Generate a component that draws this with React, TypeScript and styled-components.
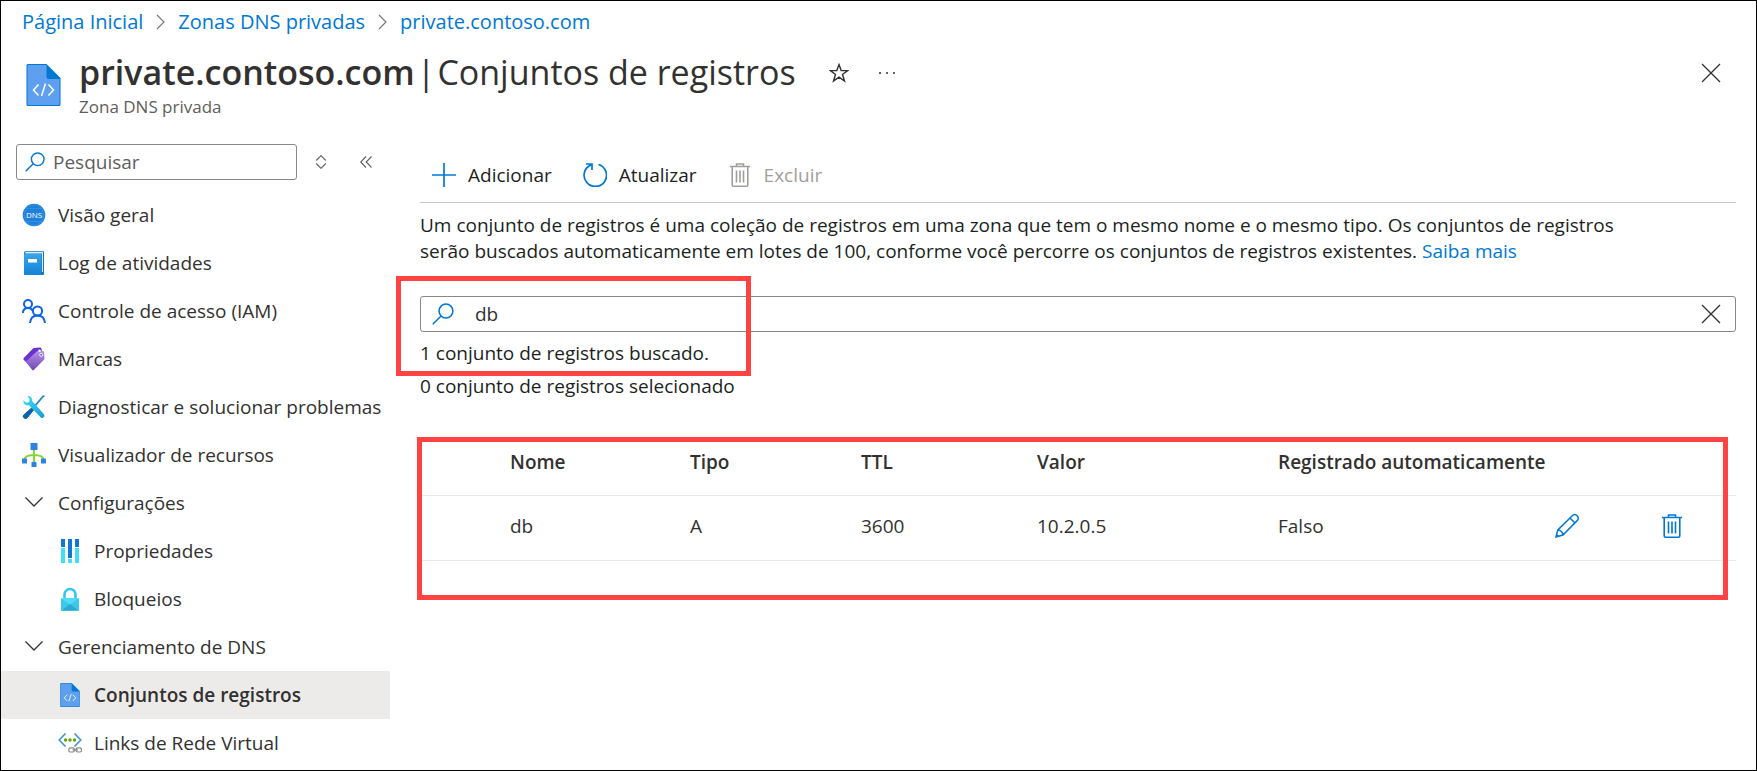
import React, { useState } from 'react';
import styled, { createGlobalStyle } from 'styled-components';

const GlobalStyle = createGlobalStyle`
  *, *::before, *::after { box-sizing: border-box; }
  body {
    margin: 0;
    background: #fff;
    color: #323130;
    font-family: 'Open Sans', 'Noto Sans', sans-serif;
    font-size: 19px;
    line-height: 26px;
  }
  button, input { font: inherit; color: inherit; }
  svg { display: block; flex: none; }
`;

const LINK = '#0078d4';
const MARK = '#ff4343';

const Page = styled.div`
  display: flex;
  flex-direction: column;
  min-height: 100vh;
  border: 1px solid #000;
`;

const Breadcrumb = styled.nav`
  padding: 8px 21px 0;
  font-size: 20px;

  ol {
    display: flex;
    align-items: center;
    gap: 13px;
    margin: 0;
    padding: 0;
    list-style: none;
  }
  li {
    display: flex;
    align-items: center;
    gap: 13px;
  }
`;

const Link = styled.a`
  color: ${LINK};
  text-decoration: none;
`;

const Header = styled.header`
  display: flex;
  align-items: flex-start;
  padding: 14px 33px 0 25px;
`;

const HeaderIcon = styled.div`
  padding: 15px 18px 0 0;
`;

const Titles = styled.div`
  h1 {
    display: flex;
    gap: 2px;
    margin: 0;
    font-size: 34px;
    line-height: 46px;
    font-weight: 400;
  }
  strong { font-weight: 600; }
  p {
    margin: 0;
    font-size: 17px;
    line-height: 24px;
    color: #605e5c;
  }
`;

const IconButton = styled.button`
  display: flex;
  align-items: center;
  justify-content: center;
  flex: none;
  width: 24px;
  height: 24px;
  padding: 0;
  border: 0;
  background: none;
`;

const TitleActions = styled.div`
  display: flex;
  align-items: center;
  flex: 1;
  gap: 24px;
  height: 48px;
  padding-left: 31px;

  button:last-child { margin-left: auto; }
`;

const Body = styled.div`
  display: flex;
  flex: 1;
`;

const Sidebar = styled.aside`
  flex: none;
  width: 389px;
`;

const SidebarTools = styled.div`
  display: flex;
  align-items: center;
  padding: 25px 12px 0 15px;

  button { margin-left: 12px; }
  button + button { margin-left: 21px; }
`;

const SearchField = styled.label<{ $wide?: boolean }>`
  display: flex;
  align-items: center;
  flex: 1;
  gap: ${(p) => (p.$wide ? 21 : 8)}px;
  min-width: 0;
  height: 36px;
  padding: ${(p) => (p.$wide ? '0 12px 0 11px' : '0 8px')};
  border: 1px solid #8a8886;
  border-radius: 3px;

  input {
    flex: 1;
    min-width: 0;
    padding: 0;
    border: 0;
    outline: 0;
    background: none;
  }
  input::placeholder { color: #605e5c; opacity: 1; }
`;

const Menu = styled.ul`
  margin: 0;
  padding: 11px 0 3px;
  list-style: none;

  ul {
    margin: 0;
    padding: 0;
    list-style: none;
  }
`;

const menuRow = `
  display: flex;
  align-items: center;
  gap: 12px;
  width: 100%;
  height: 48px;
  border: 0;
  text-align: left;
  white-space: nowrap;
  color: inherit;
  text-decoration: none;
`;

const MenuLink = styled.a<{ $nested?: boolean; $selected?: boolean }>`
  ${menuRow}
  padding-left: ${(p) => (p.$nested ? 57 : 21)}px;
  background: ${(p) => (p.$selected ? '#edebe9' : 'transparent')};
  font-weight: ${(p) => (p.$selected ? 600 : 400)};
`;

const MenuGroup = styled.button`
  ${menuRow}
  padding: 0 0 0 21px;
  background: none;
`;

const Main = styled.main`
  flex: 1;
  min-width: 0;
  padding: 24px 20px 0 30px;
`;

const Toolbar = styled.div`
  display: flex;
  align-items: center;
  gap: 31px;
  height: 60px;
  padding: 5px 12px 0;
  border-bottom: 1px solid #c8c6c4;
`;

const Command = styled.button`
  display: flex;
  align-items: center;
  gap: 12px;
  padding: 0;
  border: 0;
  background: none;
  color: #201f1e;

  &:disabled { color: #a19f9d; }
`;

const Intro = styled.p`
  max-width: 1230px;
  margin: 0;
  padding: 9px 0 32px;
  color: #201f1e;
`;

const Marked = styled.div`
  position: relative;
`;

const Callout = styled.div<{ $inset: string; $width?: string }>`
  position: absolute;
  inset: ${(p) => p.$inset};
  width: ${(p) => p.$width ?? 'auto'};
  border: 5px solid ${MARK};
  pointer-events: none;
`;

const Status = styled.p`
  margin: 0;
  padding-top: 9px;
  line-height: 24px;
  color: #201f1e;
`;

const TableArea = styled(Marked)`
  margin-top: 33px;
  padding-bottom: 39px;
`;

const RecordTable = styled.table`
  width: 100%;
  table-layout: fixed;
  border-collapse: collapse;

  th, td {
    height: 65px;
    padding: 0 0 1px;
    border-bottom: 1px solid #edebe9;
    text-align: left;
    white-space: nowrap;
    font-weight: 400;
  }
  th { height: 64px; font-weight: 600; }
  td { padding-bottom: 3px; }
`;

const Search = ({ size = 20 }: { size?: number }) => (
  <svg width={size} height={size} viewBox="0 0 20 20" fill="none" stroke={LINK} strokeWidth="1.4">
    <circle cx="12.7" cy="7.3" r="6.3" />
    <path d="M8.2 11.8 0.7 19.3" />
  </svg>
);

const Close = () => (
  <svg width="20" height="20" viewBox="0 0 20 20" fill="none" stroke="#323130" strokeWidth="1.3">
    <path d="m1 1 18 18M19 1 1 19" />
  </svg>
);

const Crumb = () => (
  <svg width="9" height="16" viewBox="0 0 9 16" fill="none" stroke="#797775" strokeWidth="1.2">
    <path d="m1 1 7 7-7 7" />
  </svg>
);

const Star = () => (
  <svg width="20" height="20" viewBox="0 0 20 20" fill="none" stroke="#323130" strokeWidth="1.4">
    <path d="m10 1.6 2.2 6h6.5l-5.200 3.900 2 6.500L10 14.100l-5.500 3.900 2-6.500-5.200-3.900h6.500z" />
  </svg>
);

const Dots = () => (
  <svg width="18" height="4" viewBox="0 0 18 4" fill="#323130">
    <circle cx="2" cy="2" r="1" />
    <circle cx="9" cy="2" r="1" />
    <circle cx="16" cy="2" r="1" />
  </svg>
);

const Expand = () => (
  <svg width="12" height="14" viewBox="0 0 12 14" fill="none" stroke="#605e5c" strokeWidth="1.1">
    <path d="m1.200 5.500 4.800-4.800 4.800 4.800M1.200 8.500 6 13.300l4.800-4.800" />
  </svg>
);

const Collapse = () => (
  <svg width="12" height="12" viewBox="0 0 12 12" fill="none" stroke="#605e5c" strokeWidth="1.1">
    <path d="M6 .5.7 6 6 11.500M11.500.5 6.200 6l5.300 5.500" />
  </svg>
);

const Chevron = () => (
  <svg width="24" height="24" viewBox="0 0 24 24" fill="none" stroke="#323130" strokeWidth="1.3">
    <path d="m3.500 6.500 8.500 8.500 8.500-8.500" />
  </svg>
);

const ZoneFile = ({ width, height }: { width: number; height: number }) => (
  <svg width={width} height={height} viewBox="0 0 34 42">
    <path d="M1.500 0H20l14 14v26.500a1.500 1.500 0 0 1-1.500 1.500h-31A1.500 1.500 0 0 1 0 40.500v-39A1.500 1.500 0 0 1 1.500 0z" fill="#0078d4" />
    <path d="M1.800 1H20v12a2 2 0 0 0 2 2h11v25a1 1 0 0 1-1 1H2a1 1 0 0 1-1-1V1.800A.8.8 0 0 1 1.800 1z" fill="#5ea0ef" />
    <path d="m12 20.500-5 5.500 5 5.500M22 20.500l5 5.500-5 5.500M19 19.500l-4 12.500" fill="none" stroke="#fff" strokeWidth="1.500" />
  </svg>
);

const Dns = () => (
  <svg width="24" height="24" viewBox="0 0 24 24">
    <circle cx="12" cy="12" r="11.300" fill="#1f80dc" />
    <path d="M4 5.500 8.500 2h7L20 5.500l2 6.500-2 6.500-4.500 3.500h-7L4 18.500 2 12zM4 5.500h16M4 18.500h16" fill="none" stroke="#3f9bf0" strokeWidth=".6" />
    <text x="12" y="15" fill="#fff" fontSize="8" textAnchor="middle">DNS</text>
  </svg>
);

const Log = () => (
  <svg width="24" height="24" viewBox="0 0 24 24">
    <defs>
      <linearGradient id="log" x1="0" y1="0" x2="0" y2="1">
        <stop offset="0" stopColor="#3ba5ea" />
        <stop offset="1" stopColor="#1583d6" />
      </linearGradient>
    </defs>
    <path d="M4 0h17a1 1 0 0 1 1 1v22a1 1 0 0 1-1 1H3a1 1 0 0 1-1-1V2a2 2 0 0 1 2-2z" fill="#1a78b8" />
    <path d="M4 .8h17V21h-1V2.500H3.200A1.700 1.700 0 0 1 4 .8z" fill="#d9eefb" />
    <path d="M2 3h17.500v21H3a1 1 0 0 1-1-1z" fill="url(#log)" />
    <path d="M6 8h9v3.500H6z" fill="#fff" />
  </svg>
);

const People = () => (
  <svg width="24" height="24" viewBox="0 0 24 24" fill="none" stroke="#0f62e6" strokeWidth="2">
    <circle cx="6" cy="5" r="4" />
    <path d="M.8 14c.3-3 2.300-5 5.200-5 2 0 3.700 1 4.500 2.500" />
    <circle cx="15.500" cy="12" r="4.600" />
    <path d="M8 24c.5-4.500 3.300-7.400 7.500-7.400S22.500 19.500 23 24" />
  </svg>
);

const Tag = () => (
  <svg width="24" height="24" viewBox="0 0 24 24">
    <defs>
      <linearGradient id="tag" x1="0" y1="0" x2="0" y2="1">
        <stop offset="0" stopColor="#b494e8" />
        <stop offset="1" stopColor="#7246b4" />
      </linearGradient>
    </defs>
    <path d="M11.500 1 18 .6a1.500 1.500 0 0 1 1.500 1.200L20.500 8 7 18l-5.300-5.300a1.200 1.200 0 0 1 .1-1.700z" fill="#6a31d0" />
    <path d="M15 4.200 20.700 4A1.500 1.500 0 0 1 22.200 5.400l.2 6a2 2 0 0 1-.7 1.600L11.800 23a1 1 0 0 1-1.500 0l-6-7.500a1 1 0 0 1 .1-1.400z" fill="url(#tag)" />
    <circle cx="17.500" cy="3.800" r="1.300" fill="#fff" />
    <circle cx="19.200" cy="7.800" r="1.500" fill="#7a45cc" stroke="#fff" />
  </svg>
);

const Tools = () => (
  <svg width="24" height="24" viewBox="0 0 24 24">
    <defs>
      <linearGradient id="wrench" x1="0" y1="0" x2="1" y2="1">
        <stop offset="0" stopColor="#3fe0fa" />
        <stop offset="1" stopColor="#1a9cd0" />
      </linearGradient>
    </defs>
    <path d="M22.500 1 21 1.500l-3 3.500-5.500 6.500" fill="none" stroke="#1b87c4" strokeWidth="1.800" />
    <path d="m12 11 1.500 1.500-8 10a2 2 0 0 1-3.800-2.500z" fill="#0a62ac" stroke="#0a62ac" />
    <path d="M5.500 1c2.800-.3 5 1.700 4.600 5L21.800 19a2.200 2.200 0 0 1-3.300 3.200L7 10.300C3.500 11 1 8.500 1.400 5.200l3.100 2.600 2.700-.7.300-2.800z" fill="url(#wrench)" />
  </svg>
);

const Tree = () => (
  <svg width="24" height="24" viewBox="0 0 24 24">
    <path d="M12 6v14M2.500 17c0-4 4-5 9.500-5s9.500 1 9.500 5" fill="none" stroke="#86d633" strokeWidth="2" />
    <rect x="8.500" y="0" width="7" height="7" rx=".6" fill="#2f83e0" />
    <rect x="0" y="15.500" width="5" height="5" rx=".5" fill="#2f83e0" />
    <rect x="9.500" y="19" width="5" height="5" rx=".5" fill="#2f83e0" />
    <rect x="19" y="15.500" width="5" height="5" rx=".5" fill="#2f83e0" />
  </svg>
);

const Sliders = () => (
  <svg width="24" height="24" viewBox="0 0 24 24">
    <path d="M3 0h4v8H3zM10 0h4v19h-4zM17 0h4v8h-4z" fill="#1078d4" />
    <path d="M3 9h4v15H3zM10 20h4v4h-4zM17 9h4v15h-4z" fill="#42ddf8" />
  </svg>
);

const Lock = () => (
  <svg width="24" height="24" viewBox="0 0 24 24">
    <path d="M6.500 12V7.500a5.500 5.500 0 0 1 11 0V12" fill="none" stroke="#32c8ee" strokeWidth="2.600" />
    <rect x="3" y="11" width="18" height="13" rx=".8" fill="#4fdcf6" />
    <path d="m3 11.500 9 6-9 6zM21 11.500l-9 6 9 6z" fill="#3cc8ea" />
    <path d="M3.400 23.600 12 17l8.600 6.600z" fill="#2ba9cf" />
  </svg>
);

const NetLink = () => (
  <svg width="24" height="24" viewBox="0 0 24 24" fill="none">
    <path d="M7.500 2.500 1.200 9l6.300 6.500M16.500 2.500 22.800 9l-6.300 6.500" stroke="#3a97cf" strokeWidth="1.600" />
    <g fill="#5ea60c">
      <circle cx="7.500" cy="9" r="1.700" />
      <circle cx="12" cy="9" r="1.700" />
      <circle cx="16.500" cy="9" r="1.700" />
    </g>
    <path d="M15 16.800h-2.200a2 2 0 0 0 0 4.200H15a2 2 0 0 0 1.500-2.100A2 2 0 0 0 15 16.800zM19.500 16.800h2a2 2 0 0 1 0 4.200h-2a2 2 0 0 1-1.500-2.100 2 2 0 0 1 1.500-2.100zM14.500 18.900h5.500" stroke="#8c8c8c" strokeWidth="1.200" />
  </svg>
);

const Plus = () => (
  <svg width="24" height="24" viewBox="0 0 24 24" stroke={LINK} strokeWidth="1.700">
    <path d="M12 0v24M0 12h24" />
  </svg>
);

const Refresh = () => (
  <svg width="24" height="24" viewBox="0 0 24 24" fill="none" stroke={LINK} strokeWidth="1.700">
    <path d="M15.500 1.500A11.200 11.200 0 1 1 8 1.900M3 1h6v6" />
  </svg>
);

const Trash = ({ color }: { color: string }) => (
  <svg width="24" height="24" viewBox="0 0 24 24" fill="none" stroke={color} strokeWidth="1.600">
    <path d="M2 3.500h20M8.500 3.500V1h7v2.500M4.200 3.500V22a1.200 1.200 0 0 0 1.200 1.200h13.200a1.200 1.200 0 0 0 1.200-1.200V3.500M8.500 7.500v12M12 7.500v12M15.500 7.500v12" />
  </svg>
);

const Pencil = () => (
  <svg width="24" height="24" viewBox="0 0 24 24" fill="none" stroke={LINK} strokeWidth="1.500">
    <path d="M1 23l1.800-7L17.300 1.700a3.300 3.300 0 0 1 4.900 0 3.400 3.400 0 0 1 0 4.900L7.900 21zM15 4l5 5M2.800 16c2.700 0 5.100 2.200 5.100 5M1.500 20.500l2 2" />
  </svg>
);

const mainItems = [
  { label: 'Visão geral', icon: <Dns /> },
  { label: 'Log de atividades', icon: <Log /> },
  { label: 'Controle de acesso (IAM)', icon: <People /> },
  { label: 'Marcas', icon: <Tag /> },
  { label: 'Diagnosticar e solucionar problemas', icon: <Tools /> },
  { label: 'Visualizador de recursos', icon: <Tree /> },
];

const groups = [
  {
    label: 'Configurações',
    items: [
      { label: 'Propriedades', icon: <Sliders /> },
      { label: 'Bloqueios', icon: <Lock /> },
    ],
  },
  {
    label: 'Gerenciamento de DNS',
    items: [
      { label: 'Conjuntos de registros', icon: <ZoneFile width={24} height={24} />, selected: true },
      { label: 'Links de Rede Virtual', icon: <NetLink /> },
    ],
  },
];

const records = [{ name: 'db', type: 'A', ttl: '3600', value: '10.2.0.5', auto: 'Falso' }];

const columns = [90, 180, 171, 176, 241, undefined, 105, 76];

export default function App() {
  const [query, setQuery] = useState('db');
  return (
    <Page>
      <GlobalStyle />
      <Breadcrumb aria-label="Trilha">
        <ol>
          <li><Link href="#inicio">Página Inicial</Link><Crumb /></li>
          <li><Link href="#zonas">Zonas DNS privadas</Link><Crumb /></li>
          <li><Link href="#zona">private.contoso.com</Link></li>
        </ol>
      </Breadcrumb>
      <Header>
        <HeaderIcon><ZoneFile width={35} height={42} /></HeaderIcon>
        <Titles>
          <h1>
            <strong>private.contoso.com</strong>
            <span>|</span>
            <span>Conjuntos de registros</span>
          </h1>
          <p>Zona DNS privada</p>
        </Titles>
        <TitleActions>
          <IconButton aria-label="Favorito"><Star /></IconButton>
          <IconButton aria-label="Mais opções"><Dots /></IconButton>
          <IconButton aria-label="Fechar"><Close /></IconButton>
        </TitleActions>
      </Header>
      <Body>
        <Sidebar>
          <SidebarTools>
            <SearchField>
              <Search />
              <input type="text" placeholder="Pesquisar" aria-label="Pesquisar no menu" />
            </SearchField>
            <IconButton aria-label="Expandir tudo"><Expand /></IconButton>
            <IconButton aria-label="Recolher menu"><Collapse /></IconButton>
          </SidebarTools>
          <nav aria-label="Recursos">
            <Menu>
              {mainItems.map((item) => (
                <li key={item.label}>
                  <MenuLink href="#item">{item.icon}{item.label}</MenuLink>
                </li>
              ))}
              {groups.map((group) => (
                <li key={group.label}>
                  <MenuGroup aria-expanded="true"><Chevron />{group.label}</MenuGroup>
                  <ul>
                    {group.items.map((item) => (
                      <li key={item.label}>
                        <MenuLink href="#item" $nested $selected={'selected' in item}>
                          {item.icon}{item.label}
                        </MenuLink>
                      </li>
                    ))}
                  </ul>
                </li>
              ))}
            </Menu>
          </nav>
        </Sidebar>
        <Main>
          <Toolbar>
            <Command><Plus />Adicionar</Command>
            <Command><Refresh />Atualizar</Command>
            <Command disabled><Trash color="#a19f9d" />Excluir</Command>
          </Toolbar>
          <Intro>
            Um conjunto de registros é uma coleção de registros em uma zona que tem o mesmo nome e o
            mesmo tipo. Os conjuntos de registros serão buscados automaticamente em lotes de 100,
            conforme você percorre os conjuntos de registros existentes.{' '}
            <Link href="#saiba-mais">Saiba mais</Link>
          </Intro>
          <Marked>
            <SearchField $wide>
              <Search size={22} />
              <input
                type="text"
                value={query}
                onChange={(e) => setQuery(e.target.value)}
                aria-label="Pesquisar conjuntos de registros"
              />
              <IconButton aria-label="Limpar" onClick={() => setQuery('')}><Close /></IconButton>
            </SearchField>
            <Status>1 conjunto de registros buscado.</Status>
            <Callout $inset="-20px auto -11px -24px" $width="355px" />
          </Marked>
          <Status>0 conjunto de registros selecionado</Status>
          <TableArea>
            <RecordTable>
              <colgroup>
                {columns.map((width, i) => <col key={i} width={width} />)}
              </colgroup>
              <thead>
                <tr>
                  <th />
                  <th scope="col">Nome</th>
                  <th scope="col">Tipo</th>
                  <th scope="col">TTL</th>
                  <th scope="col">Valor</th>
                  <th scope="col">Registrado automaticamente</th>
                  <th />
                  <th />
                </tr>
              </thead>
              <tbody>
                {records.map((r) => (
                  <tr key={r.name}>
                    <td />
                    <td>{r.name}</td>
                    <td>{r.type}</td>
                    <td>{r.ttl}</td>
                    <td>{r.value}</td>
                    <td>{r.auto}</td>
                    <td><IconButton aria-label="Editar"><Pencil /></IconButton></td>
                    <td><IconButton aria-label="Excluir registro"><Trash color={LINK} /></IconButton></td>
                  </tr>
                ))}
              </tbody>
            </RecordTable>
            <Callout $inset="6px 8px 0 -3px" />
          </TableArea>
        </Main>
      </Body>
    </Page>
  );
}
